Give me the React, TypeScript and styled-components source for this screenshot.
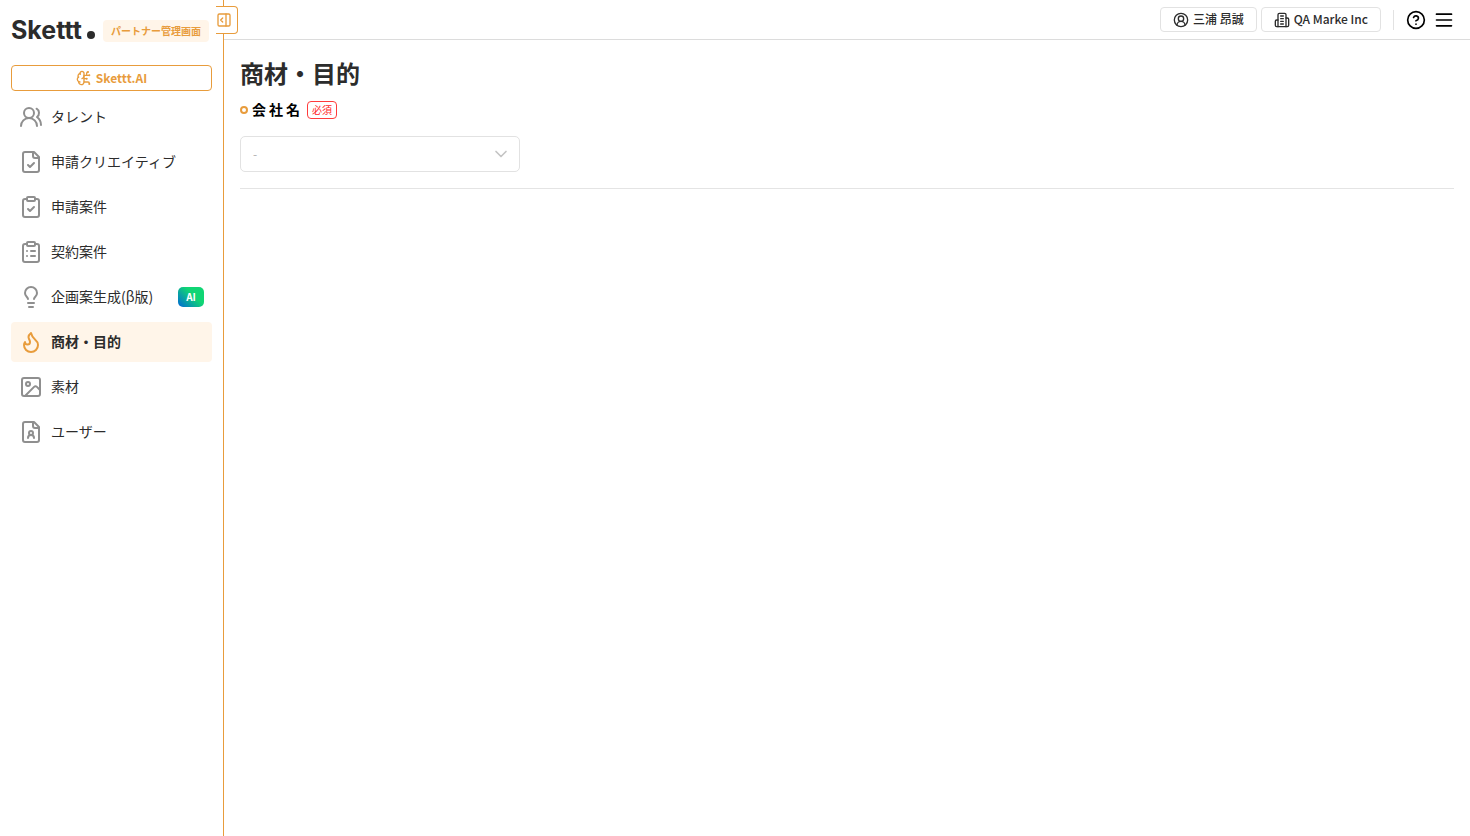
import React from 'react';
import styled, { createGlobalStyle } from 'styled-components';
import {
  ChevronDown,
  CircleHelp,
  CircleUserRound,
  ClipboardCheck,
  ClipboardList,
  Flame,
  Lightbulb,
  PanelRightOpen,
  UsersRound,
} from 'lucide-react';

const accent = '#e89c3c';

const GlobalStyle = createGlobalStyle`
  *, *::before, *::after { box-sizing: border-box; }
  body {
    margin: 0;
    color: #2c2c2c;
    background: #fff;
    font-family: "Noto Sans CJK JP", sans-serif;
    font-size: 14px;
  }
  button, select { font: inherit; color: inherit; }
  svg { display: block; flex-shrink: 0; }
`;

const Page = styled.div`
  display: flex;
  min-height: 100vh;
`;

const Sidebar = styled.aside`
  position: relative;
  flex: 0 0 224px;
  padding: 20px 11px;
  border-right: 1px solid ${accent};
`;

const CollapseButton = styled.button`
  position: absolute;
  top: 6px;
  right: -15px;
  display: flex;
  align-items: center;
  width: 22px;
  height: 28px;
  padding: 0;
  border: 1px solid ${accent};
  border-left: 0;
  border-radius: 0 4px 4px 0;
  background: #fff;
  color: ${accent};
  cursor: pointer;
`;

const Brand = styled.div`
  display: flex;
  align-items: center;
  gap: 8px;
  height: 22px;
  margin-bottom: 23px;
`;

const Logo = styled.a`
  display: flex;
  align-items: baseline;
  gap: 5px;
  padding-bottom: 2px;
  color: #2c2c2c;
  font-family: Inter, "Liberation Sans", sans-serif;
  font-size: 25px;
  font-weight: 700;
  line-height: 20px;
  text-decoration: none;
`;

const LogoDot = styled.span`
  width: 8px;
  height: 8px;
  border-radius: 50%;
  background: currentColor;
`;

const BrandTag = styled.span`
  padding: 0 8px;
  border-radius: 4px;
  background: #fff5e9;
  color: ${accent};
  font-size: 10px;
  font-weight: 700;
  line-height: 22px;
  white-space: nowrap;
`;

/* The font sits low in its line box; the padding centres it beside an icon. */
const Caption = styled.span`
  padding-bottom: 2px;
`;

const AssistantButton = styled.button`
  display: flex;
  align-items: center;
  justify-content: center;
  gap: 4px;
  width: 100%;
  height: 26px;
  margin-bottom: 6px;
  padding: 0;
  border: 1px solid ${accent};
  border-radius: 4px;
  background: #fff;
  color: ${accent};
  font-size: 12px;
  font-weight: 700;
  cursor: pointer;
`;

const NavList = styled.ul`
  display: flex;
  flex-direction: column;
  gap: 5px;
  margin: 0;
  padding: 0;
  list-style: none;
`;

const NavLink = styled.a<{ $active?: boolean }>`
  display: flex;
  align-items: center;
  gap: 8px;
  height: 40px;
  padding: 0 8px;
  border-radius: 4px;
  background: ${(p) => (p.$active ? '#fff5e9' : 'transparent')};
  color: #2c2c2c;
  font-weight: ${(p) => (p.$active ? 700 : 400)};
  text-decoration: none;
  white-space: nowrap;

  svg { color: ${(p) => (p.$active ? accent : '#8f8f8f')}; }
`;

const AiBadge = styled.span`
  margin-left: auto;
  width: 26px;
  border-radius: 5px;
  background: linear-gradient(45deg, #0068d6 0%, #10d574 60%);
  color: #fff;
  font-size: 10px;
  font-weight: 700;
  line-height: 20px;
  text-align: center;
`;

const Content = styled.div`
  flex: 1;
  min-width: 0;
`;

const Header = styled.header`
  display: flex;
  align-items: center;
  justify-content: flex-end;
  height: 40px;
  padding: 0 16px;
  border-bottom: 1px solid #dcdcdc;
`;

const AccountButton = styled.button`
  display: flex;
  align-items: center;
  gap: 4px;
  height: 25px;
  margin-right: 4px;
  padding: 0 12px;
  border: 1px solid #e2e2e2;
  border-radius: 4px;
  background: #fff;
  font-size: 12px;
  font-weight: 500;
  cursor: pointer;
`;

const Divider = styled.span`
  width: 1px;
  height: 20px;
  margin: 0 12px 0 8px;
  background: #e2e2e2;
`;

const IconButton = styled.button`
  margin-right: 8px;
  padding: 0;
  border: 0;
  background: none;
  color: #000;
  cursor: pointer;

  &:last-child { margin-right: 0; }
`;

const Main = styled.main`
  padding: 16px;
`;

const Title = styled.h1`
  margin: 0 0 2px;
  font-size: 24px;
  font-weight: 700;
  line-height: 34px;
`;

const Field = styled.div`
  padding-bottom: 16px;
  border-bottom: 1px solid #e4e4e4;
`;

const FieldLabel = styled.label`
  display: flex;
  align-items: center;
  height: 36px;
  color: #000;
  font-weight: 700;
  letter-spacing: 3px;

  &::before {
    content: "";
    width: 8px;
    height: 8px;
    margin-right: 4px;
    border: 2px solid ${accent};
    border-radius: 50%;
  }
`;

const Required = styled.span`
  margin-left: 4px;
  padding: 0 4px;
  border: 1px solid #ff3b3b;
  border-radius: 4px;
  color: #ff1f1f;
  font-size: 10px;
  font-weight: 400;
  letter-spacing: 0;
  line-height: 16px;
`;

const SelectBox = styled.div`
  position: relative;
  max-width: 280px;
  margin-top: 8px;

  svg {
    position: absolute;
    top: 8px;
    right: 9px;
    color: #c4c4c4;
    pointer-events: none;
  }
`;

const Select = styled.select`
  width: 100%;
  height: 36px;
  padding: 0 32px 2px 12px;
  border: 1px solid #e2e2e2;
  border-radius: 5px;
  background: #fff;
  color: #b0b0b0;
  font-size: 12px;
  appearance: none;
`;

const Drawing = ({ size = 24, children }: { size?: number; children: React.ReactNode }) => (
  <svg width={size} height={size} viewBox="0 0 24 24" fill="none" stroke="currentColor" strokeWidth={2} strokeLinecap="round" strokeLinejoin="round" aria-hidden="true">
    {children}
  </svg>
);

const Sheet = () => (
  <>
    <path d="M15 2H6a2 2 0 0 0-2 2v16a2 2 0 0 0 2 2h12a2 2 0 0 0 2-2V7Z" />
    <path d="M14 2v4a2 2 0 0 0 2 2h4" />
  </>
);

const FileCheckIcon = () => (
  <Drawing>
    <Sheet />
    <path d="m9 15 2 2 4-4" />
  </Drawing>
);

const FileUserIcon = () => (
  <Drawing>
    <Sheet />
    <circle cx="12" cy="13" r="2" />
    <path d="M15 18a3 3 0 1 0-6 0" />
  </Drawing>
);

const PictureIcon = () => (
  <Drawing>
    <rect x="3" y="3" width="18" height="18" rx="2" />
    <circle cx="9" cy="9" r="2" />
    <path d="m21 15-3.086-3.086a2 2 0 0 0-2.828 0L6 21" />
  </Drawing>
);

const BuildingIcon = () => (
  <Drawing size={16}>
    <path d="M6 22V4a2 2 0 0 1 2-2h8a2 2 0 0 1 2 2v18Z" />
    <path d="M6 12H4a2 2 0 0 0-2 2v6a2 2 0 0 0 2 2h2" />
    <path d="M18 9h2a2 2 0 0 1 2 2v9a2 2 0 0 1-2 2h-2" />
    <path d="M10 6h4M10 10h4M10 14h4M10 18h4" />
  </Drawing>
);

const MenuIcon = () => (
  <Drawing size={20}>
    <path d="M3 5h18M3 12h18M3 19h18" />
  </Drawing>
);

const BrainIcon = () => (
  <Drawing size={16}>
    <path d="M12 5a3 3 0 1 0-5.997.125 4 4 0 0 0-2.526 5.77 4 4 0 0 0 .556 6.588A4 4 0 1 0 12 18Z" />
    <path d="M9 13a4.5 4.5 0 0 0 3-4" />
    <path d="M6.003 5.125A3 3 0 0 0 6.401 6.5M3.477 10.896a4 4 0 0 1 .585-.396M6 18a4 4 0 0 1-1.967-.516" />
    <path d="M12 13h4M12 18h6a2 2 0 0 1 2 2v1M12 8h8M16 8V5a2 2 0 0 1 2-2" />
    <circle cx="16" cy="13" r=".5" />
    <circle cx="18" cy="3" r=".5" />
    <circle cx="20" cy="21" r=".5" />
    <circle cx="20" cy="8" r=".5" />
  </Drawing>
);

const navItems = [
  { label: 'タレント', icon: <UsersRound /> },
  { label: '申請クリエイティブ', icon: <FileCheckIcon /> },
  { label: '申請案件', icon: <ClipboardCheck /> },
  { label: '契約案件', icon: <ClipboardList /> },
  { label: '企画案生成(β版)', icon: <Lightbulb />, ai: true },
  { label: '商材・目的', icon: <Flame />, active: true },
  { label: '素材', icon: <PictureIcon /> },
  { label: 'ユーザー', icon: <FileUserIcon /> },
];

export default function App() {
  return (
    <Page>
      <GlobalStyle />
      <Sidebar>
        <Brand>
          <Logo href="#">
            Skettt
            <LogoDot />
          </Logo>
          <BrandTag>パートナー管理画面</BrandTag>
        </Brand>
        <AssistantButton type="button">
          <BrainIcon />
          <Caption>Skettt.AI</Caption>
        </AssistantButton>
        <nav>
          <NavList>
            {navItems.map((item) => (
              <li key={item.label}>
                <NavLink href="#" $active={item.active} aria-current={item.active ? 'page' : undefined}>
                  {item.icon}
                  <Caption>{item.label}</Caption>
                  {item.ai && <AiBadge>AI</AiBadge>}
                </NavLink>
              </li>
            ))}
          </NavList>
        </nav>
        <CollapseButton type="button" aria-label="メニューを閉じる">
          <PanelRightOpen size={16} />
        </CollapseButton>
      </Sidebar>
      <Content>
        <Header>
          <AccountButton type="button">
            <CircleUserRound size={16} />
            <Caption>三浦 昂誠</Caption>
          </AccountButton>
          <AccountButton type="button">
            <BuildingIcon />
            <Caption>QA Marke Inc</Caption>
          </AccountButton>
          <Divider />
          <IconButton type="button" aria-label="ヘルプ">
            <CircleHelp size={20} />
          </IconButton>
          <IconButton type="button" aria-label="メニュー">
            <MenuIcon />
          </IconButton>
        </Header>
        <Main>
          <Title>商材・目的</Title>
          <Field>
            <FieldLabel htmlFor="company">
              <Caption>会社名</Caption>
              <Required>必須</Required>
            </FieldLabel>
            <SelectBox>
              <Select id="company" defaultValue="">
                <option value="">-</option>
              </Select>
              <ChevronDown size={20} />
            </SelectBox>
          </Field>
        </Main>
      </Content>
    </Page>
  );
}
